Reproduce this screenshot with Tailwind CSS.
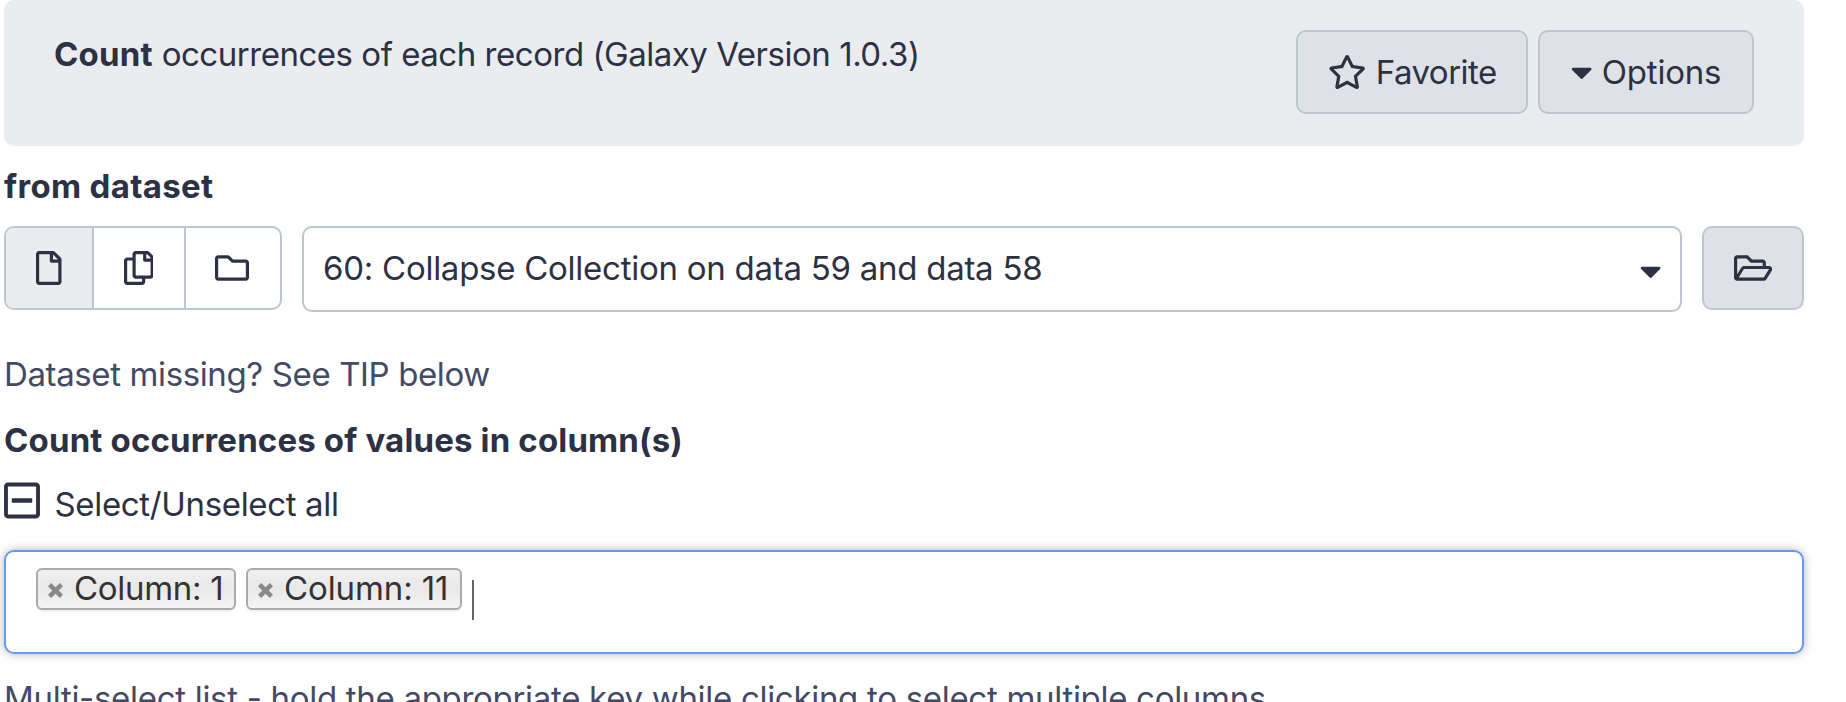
<!DOCTYPE html>
<html lang="en">
<head>
<meta charset="utf-8">
<title>Count</title>
<script src="https://cdn.jsdelivr.net/npm/@tailwindcss/browser@4"></script>
</head>
<body class="h-[702px] overflow-hidden bg-white pl-1 font-['Inter',sans-serif] text-[33px] leading-[48px] text-[#2c3143] whitespace-nowrap">
<main class="w-[1800px]">
  <header class="flex h-[146px] items-start justify-between rounded-[10px] bg-[#ebecf0] pt-[30px] pr-[50px] pl-[50px]">
    <h1 class="tracking-[-0.47px]"><b class="tracking-[0.2px]">Count</b> occurrences of each record (Galaxy Version 1.0.3)</h1>
    <div class="flex gap-[10px]">
      <button class="flex h-[84px] w-[232px] items-center rounded-[10px] border-2 border-[#bdc6d0] bg-[#dee2e6] pl-[30px]">
        <svg class="h-[34px] w-[38.25px]" viewBox="0 0 576 512" fill="currentColor"><path d="M528.1 171.5L382 150.2 316.7 17.8c-11.7-23.6-45.6-23.9-57.4 0L194 150.2 47.9 171.5c-26.2 3.8-36.7 36.1-17.7 54.6l105.7 103-25 145.5c-4.5 26.3 23.2 46 46.4 33.7L288 439.6l130.7 68.7c23.2 12.2 50.9-7.4 46.4-33.7l-25-145.5 105.7-103c19-18.5 8.5-50.8-17.7-54.6zM388.6 312.3l23.7 138.4L288 385.4l-124.3 65.3 23.7-138.4-100.6-98 139-20.2 62.2-126 62.2 126 139 20.2-100.6 98z"/></svg>
        <span class="ml-[9.500px] tracking-[-0.5px]">Favorite</span>
      </button>
      <button class="flex h-[84px] w-[216px] items-center rounded-[10px] border-2 border-[#bdc6d0] bg-[#dee2e6] pl-[31px]">
        <svg class="h-[34px] w-[21.25px]" viewBox="0 0 320 512" fill="currentColor"><path d="M31.3 192h257.3c17.8 0 26.7 21.5 14.1 34.1L174.1 354.8c-7.8 7.8-20.5 7.8-28.3 0L17.2 226.1C4.6 213.5 13.4 192 31.3 192z"/></svg>
        <span class="ml-[9.500px] tracking-[-0.2px]">Options</span>
      </button>
    </div>
  </header>

  <h2 class="mt-4 font-bold tracking-[0.33px]">from dataset</h2>
  <div class="mt-4 flex h-[86px] items-start gap-5">
    <div class="flex h-[84px] w-[278px] overflow-hidden rounded-[10px] border-2 border-[#bdc6d0]">
      <button class="flex w-[88px] items-center border-r-2 border-[#bdc6d0] bg-[#ebecf0] pb-px pl-[30px]">
        <svg class="h-[34px] w-[25.5px]" viewBox="0 0 384 512" fill="currentColor"><path d="M369.9 97.9L286 14C277 5 264.8-.1 252.1-.1H48C21.5 0 0 21.5 0 48v416c0 26.5 21.5 48 48 48h288c26.5 0 48-21.5 48-48V131.9c0-12.7-5.1-25-14.1-34zM332.1 128H256V51.9l76.1 76.1zM48 464V48h160v104c0 13.3 10.7 24 24 24h104v288H48z"/></svg>
      </button>
      <button class="flex w-[92px] items-center border-r-2 border-[#bdc6d0] pb-px pl-[29.5px]">
        <svg class="h-[34px] w-[29.75px]" viewBox="0 0 448 512" fill="currentColor"><path d="M433.941 65.941l-51.882-51.882A48 48 0 0 0 348.118 0H176c-26.51 0-48 21.49-48 48v48H48c-26.51 0-48 21.49-48 48v320c0 26.51 21.49 48 48 48h224c26.51 0 48-21.49 48-48v-48h80c26.51 0 48-21.49 48-48V99.882a48 48 0 0 0-14.059-33.941zM266 464H54a6 6 0 0 1-6-6V150a6 6 0 0 1 6-6h74v224c0 26.51 21.49 48 48 48h96v42a6 6 0 0 1-6 6zm128-96H182a6 6 0 0 1-6-6V54a6 6 0 0 1 6-6h106v88c0 13.255 10.745 24 24 24h88v202a6 6 0 0 1-6 6zm6-256h-64V48h9.632c1.591 0 3.117.632 4.243 1.757l48.368 48.368a6 6 0 0 1 1.757 4.243V112z"/></svg>
      </button>
      <button class="flex flex-1 items-center pb-px pl-[29px]">
        <svg class="size-[34px]" viewBox="0 0 512 512" fill="currentColor"><path d="M464 128H272l-54.63-54.63c-6-6-14.14-9.37-22.63-9.37H48C21.49 64 0 85.49 0 112v288c0 26.51 21.49 48 48 48h416c26.51 0 48-21.49 48-48V176c0-26.51-21.49-48-48-48zm0 272H48V112h140.12l54.63 54.63c6 6 14.14 9.37 22.63 9.37H464v224z"/></svg>
      </button>
    </div>
    <div class="flex h-[86px] w-[1380px] items-center justify-between rounded-[10px] border-2 border-[#bec5d2] pr-[18.500px] pl-[19px]">
      <span class="pb-[2px] tracking-[-0.26px]">60: Collapse Collection on data 59 and data 58</span>
      <svg class="mt-[3px] h-[34px] w-[21.25px]" viewBox="0 0 320 512" fill="currentColor"><path d="M31.3 192h257.3c17.8 0 26.7 21.5 14.1 34.1L174.1 354.8c-7.8 7.8-20.5 7.8-28.3 0L17.2 226.1C4.6 213.5 13.4 192 31.3 192z"/></svg>
    </div>
    <button class="flex h-[84px] w-[102px] items-center rounded-[10px] border-2 border-[#bdc6d0] bg-[#dee2e6] pb-px pl-[30px]">
      <svg class="h-[34px] w-[38.25px]" viewBox="0 0 576 512" fill="currentColor"><path d="M527.9 224H480v-48c0-26.5-21.5-48-48-48H272l-64-64H48C21.5 64 0 85.5 0 112v288c0 26.5 21.5 48 48 48h400c16.5 0 31.9-8.5 40.7-22.6l79.9-128c20-31.9-3-73.4-40.7-73.4zM48 118c0-3.3 2.7-6 6-6h134.1l64 64H426c3.3 0 6 2.7 6 6v42H152c-16.8 0-32.4 8.8-41.1 23.2L48 351.4zm400 282H72l77.2-128H528z"/></svg>
    </button>
  </div>
  <p class="mt-[38px] tracking-[-0.38px] text-[#434a63]">Dataset missing? See TIP below</p>

  <h2 class="mt-[18px] font-bold tracking-[0.15px]">Count occurrences of values in column(s)</h2>
  <div class="mt-4 flex h-12">
    <svg class="h-[41px] w-9" viewBox="0 0 448 512" fill="currentColor"><path d="M108 284c-6.6 0-12-5.4-12-12v-32c0-6.6 5.4-12 12-12h232c6.6 0 12 5.4 12 12v32c0 6.6-5.4 12-12 12H108zM448 80v352c0 26.5-21.5 48-48 48H48c-26.5 0-48-21.5-48-48V80c0-26.5 21.5-48 48-48h352c26.5 0 48 21.5 48 48zm-48 346V86c0-3.3-2.7-6-6-6H54c-3.3 0-6 2.7-6 6v340c0 3.300 2.700 6 6 6h340c3.300 0 6-2.700 6-6z"/></svg>
    <span class="ml-[14.500px] tracking-[-0.34px]">Select/Unselect all</span>
  </div>
  <div class="mt-[22px] flex h-[104px] items-start rounded-[10px] border-2 border-[#6699f2] pt-4 pl-[30px] text-[#333] shadow-[0_0_10px_rgba(0,0,0,0.3)]">
    <span class="flex h-[42px] w-[200px] items-center rounded-[6px] border-2 border-[#aaa] bg-linear-to-b from-[#f0f0f0] via-[#e8e8e8] to-[#f4f4f4] pl-[10px] shadow-[0_2px_1px_rgba(0,0,0,0.05)]">
      <svg class="mt-[2px] size-[15px]" viewBox="0 0 15 15" stroke="#888" stroke-width="4.500"><path d="M1.600 1.600L13.400 13.400M13.400 1.600L1.600 13.400"/></svg>
      <span class="ml-[11px] pb-[2px] tracking-[-0.3px]">Column: 1</span>
    </span>
    <span class="ml-[10px] flex h-[42px] w-[216px] items-center rounded-[6px] border-2 border-[#aaa] bg-linear-to-b from-[#f0f0f0] via-[#e8e8e8] to-[#f4f4f4] pl-[10px] shadow-[0_2px_1px_rgba(0,0,0,0.05)]">
      <svg class="mt-[2px] size-[15px]" viewBox="0 0 15 15" stroke="#888" stroke-width="4.500"><path d="M1.600 1.600L13.400 13.400M13.400 1.600L1.600 13.400"/></svg>
      <span class="ml-[11px] pb-[2px] tracking-[-0.1px]">Column: 11</span>
    </span>
    <span class="mt-3 ml-[10px] h-10 w-[2px] bg-[#666]"></span>
  </div>
  <p class="mt-[20px] tracking-[-0.3px] text-[#434a63]">Multi-select list - hold the appropriate key while clicking to select multiple columns.</p>
</main>
</body>
</html>
